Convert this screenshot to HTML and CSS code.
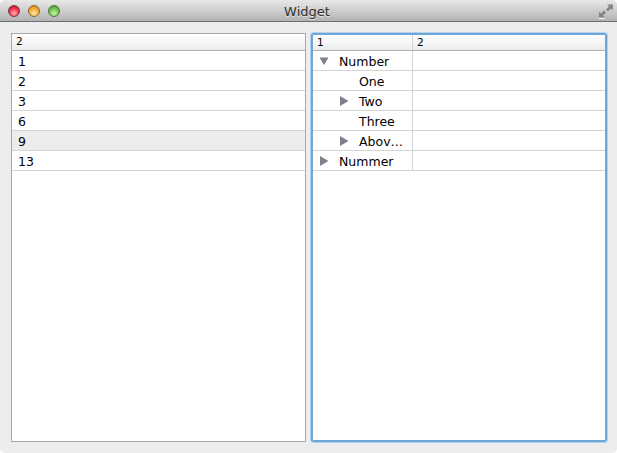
FILE: index.html
```html
<!DOCTYPE html>
<html lang="en">
<head>
<meta charset="utf-8">
<title>Widget</title>
<link rel="stylesheet" href="styles.css">
</head>
<body>
<div class="window">
  <header class="titlebar">
    <div class="lights">
      <span class="light red"></span>
      <span class="light yellow"></span>
      <span class="light green"></span>
    </div>
    <div class="title">Widget</div>
    <svg class="fullscreen" width="16" height="16" viewBox="0 0 16 16">
      <path d="M9 1.500h6v6l-2-2-3 3-2-2 3-3z" fill="#858585"/>
      <path d="M1 8.500v6h6l-2-2 3-3-2-2-3 3z" fill="#858585"/>
      <path d="M1 15.500h6" stroke="#f4f4f4" stroke-width="1"/>
    </svg>
  </header>
  <main class="content">
    <section class="panel">
      <div class="head"><div class="hcell">2</div></div>
      <div class="row"><div class="cell">1</div></div>
      <div class="row"><div class="cell">2</div></div>
      <div class="row"><div class="cell">3</div></div>
      <div class="row"><div class="cell">6</div></div>
      <div class="row selected"><div class="cell">9</div></div>
      <div class="row"><div class="cell">13</div></div>
    </section>
    <section class="panel focus">
      <div class="head cols"><div class="hcell sep">1</div><div class="hcell">2</div></div>
      <div class="row cols"><div class="cell sep l0"><svg class="arrow" width="12" height="10" viewBox="0 0 12 10"><path d="M1.500 1.500h9L6 9z"/></svg><span class="label">Number</span></div><div></div></div>
      <div class="row cols"><div class="cell sep l1"><span class="noarrow"></span><span class="label">One</span></div><div></div></div>
      <div class="row cols"><div class="cell sep l1"><svg class="arrow" width="12" height="10" viewBox="0 0 12 10"><path d="M2 0l8.500 5L2 10z"/></svg><span class="label">Two</span></div><div></div></div>
      <div class="row cols"><div class="cell sep l1"><span class="noarrow"></span><span class="label">Three</span></div><div></div></div>
      <div class="row cols"><div class="cell sep l1"><svg class="arrow" width="12" height="10" viewBox="0 0 12 10"><path d="M2 0l8.500 5L2 10z"/></svg><span class="label">Abov…</span></div><div></div></div>
      <div class="row cols"><div class="cell sep l0"><svg class="arrow" width="12" height="10" viewBox="0 0 12 10"><path d="M2 0l8.500 5L2 10z"/></svg><span class="label">Nummer</span></div><div></div></div>
    </section>
  </main>
</div>
</body>
</html>
```
FILE: styles.css
```css
* { box-sizing: border-box; }
html, body { margin: 0; height: 100%; background: #fff; }
body { font-family: "DejaVu Sans", sans-serif; color: #000; overflow: hidden; }
.window {
  width: 617px;
  height: 453px;
  background: #ededed;
  border-radius: 5px;
  overflow: hidden;
  display: flex;
  flex-direction: column;
}
.titlebar {
  height: 22px;
  flex: none;
  display: flex;
  align-items: center;
  justify-content: center;
  position: relative;
  background: linear-gradient(#e8e8e8, #d4d4d4 40%, #b2b2b2);
  border-bottom: 1px solid #6f6f6f;
}
.title { font-size: 13px; color: #2e2e2e; text-shadow: 0 1px 0 #e4e4e4; margin: 1px 3px 0 0; }
.lights { position: absolute; left: 8px; top: 5px; display: flex; gap: 8px; }
.light { width: 12px; height: 12px; border-radius: 50%; border: 1px solid #777; }
.red { background: radial-gradient(circle at 50% 72%, #ffb0b8, #ee2a48 58%, #a81528); border-color: #7d3540; }
.yellow { background: radial-gradient(circle at 50% 72%, #ffe6a8, #f4a52a 58%, #b87a14); border-color: #86683a; }
.green { background: radial-gradient(circle at 50% 72%, #d0f4a8, #66c048 58%, #3a8a28); border-color: #4f7440; }
.fullscreen { position: absolute; right: 3px; top: 3px; }
.content {
  flex: 1;
  min-height: 0;
  display: grid;
  grid-template-columns: 295px 296px;
  gap: 5px;
  padding: 11px 10px 11px 11px;
}
.panel {
  background: #fff;
  border: 1px solid #a8a8a8;
  display: flex;
  flex-direction: column;
}
.panel.focus {
  border: 1px solid #6aa5d8;
  outline: 1px solid #b4d2ec;
  box-shadow: inset 0 0 0 1px #6fa9db;
  border-radius: 2px;
  padding: 1px;
}
.head {
  height: 17px;
  flex: none;
  font-size: 10.5px;
  line-height: 15px;
  background: linear-gradient(#ffffff, #f6f6f6 50%, #ececec);
  border-bottom: 1px solid #b3b3b3;
}
.focus .head { height: 16px; }
.hcell { padding-left: 4px; height: 100%; }
.row {
  height: 20px;
  flex: none;
  font-size: 12.5px;
  border-bottom: 1px solid #d4d4d4;
}
.selected { background: #ececec; }
.cell { padding-left: 6px; line-height: 21px; height: 100%; }
.cols { display: grid; grid-template-columns: 100px 1fr; }
.sep { border-right: 1px solid #d4d4d4; }
.cell.l0, .cell.l1 { display: flex; align-items: center; }
.cell.l0 { padding-left: 5px; }
.cell.l1 { padding-left: 25px; }
.label { margin-top: 2px; line-height: 17px; }
.arrow { width: 12px; height: 10px; flex: none; margin-right: 9px; fill: #80808a; }
.noarrow { width: 12px; height: 10px; flex: none; margin-right: 9px; }
```
